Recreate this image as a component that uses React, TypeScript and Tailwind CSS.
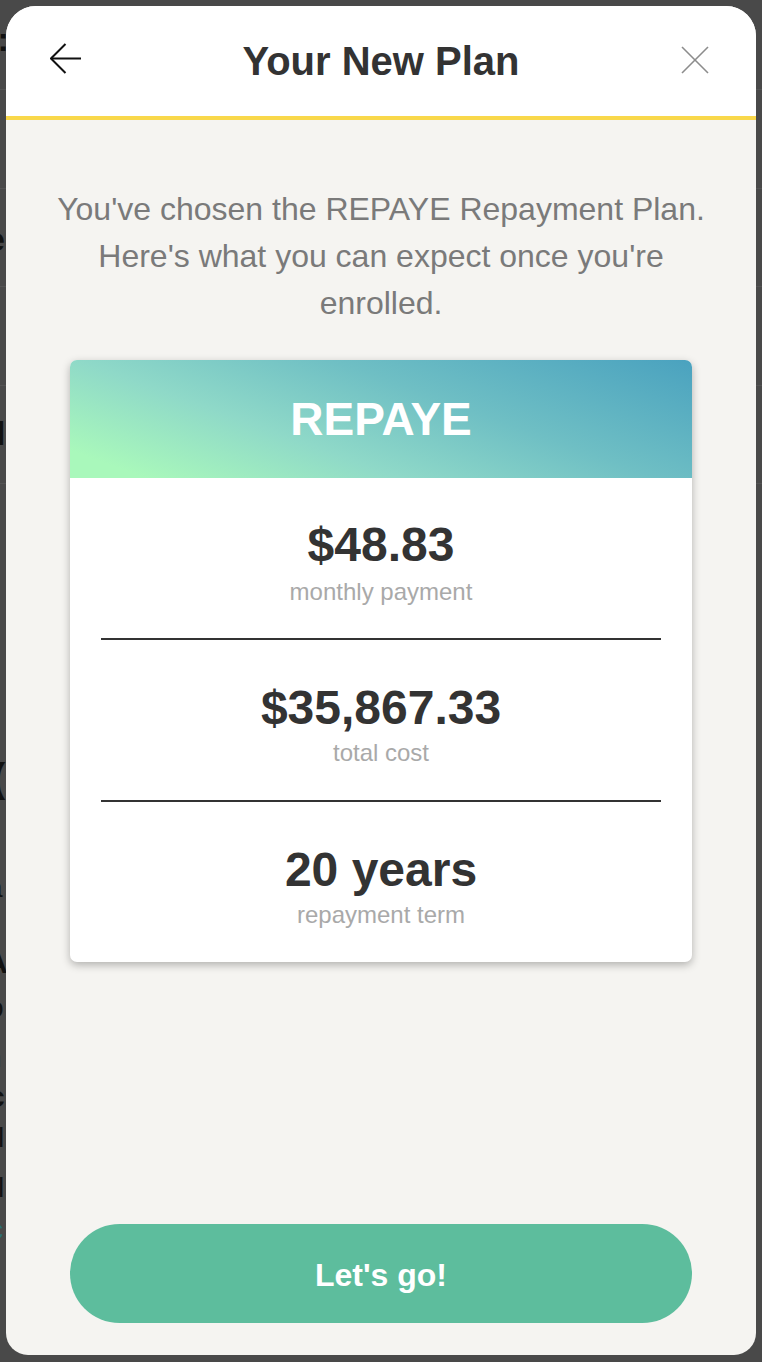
import React from 'react';

type PlanStat = {
  value: string;
  label: string;
};

const STATS: PlanStat[] = [
  { value: '$48.83', label: 'monthly payment' },
  { value: '$35,867.33', label: 'total cost' },
  { value: '20 years', label: 'repayment term' },
];

// bits of the page behind the modal that peek out on the left edge
const BACKDROP_GLYPHS = [
  { text: 'i:', cls: 'top-[22px] left-[-12px] text-[34px] font-bold text-[#111]' },
  { text: 'e', cls: 'top-[222px] left-[-14px] text-[34px] font-bold text-[#111]' },
  { text: 'l', cls: 'top-[416px] left-[-4px] text-[34px] font-bold text-[#111]' },
  { text: '(', cls: 'top-[758px] left-[-8px] text-[40px] font-bold text-[#111]' },
  { text: 'a', cls: 'top-[874px] left-[-13px] text-[28px] text-[#111]' },
  { text: 'A', cls: 'top-[948px] left-[-14px] text-[30px] font-bold text-[#111]' },
  { text: 'o', cls: 'top-[994px] left-[-12px] text-[28px] text-[#111]' },
  { text: 'n', cls: 'top-[1044px] left-[-14px] text-[28px] text-[#111]' },
  { text: 'c', cls: 'top-[1082px] left-[-12px] text-[30px] font-bold text-[#111]' },
  { text: 'l', cls: 'top-[1124px] left-[-2px] text-[28px] text-[#111]' },
  { text: 'l', cls: 'top-[1174px] left-[-2px] text-[28px] text-[#111]' },
  { text: 'c', cls: 'top-[1216px] left-[-11px] text-[28px] text-[#2e6f73]' },
];

function BackArrow() {
  return (
    <svg width="32" height="31" viewBox="0 0 32 31" fill="none" stroke="#111" strokeWidth="2">
      <path d="M1 15.5 H31" />
      <path d="M15.5 1 L1 15.5 L15.5 30" />
    </svg>
  );
}

function CloseIcon() {
  return (
    <svg width="28" height="28" viewBox="0 0 28 28" fill="none" stroke="#8c8c8c" strokeWidth="1.6">
      <path d="M1 1 L27 27" />
      <path d="M27 1 L1 27" />
    </svg>
  );
}

function StatRow({ stat, first }: { stat: PlanStat; first: boolean }) {
  return (
    <div className={first ? 'pt-[39px] pb-[33px] text-center' : 'pt-[40px] pb-[34px] text-center'}>
      <div className="text-[48px] leading-[56px] font-bold text-[#333]">{stat.value}</div>
      <div className={first ? 'mt-[6px] text-[24px] leading-[26px] text-[#a9a9a9]' : 'mt-[4px] text-[24px] leading-[26px] text-[#a9a9a9]'}>
        {stat.label}
      </div>
    </div>
  );
}

export default function App() {
  return (
    <div
      className="relative min-h-[1362px] w-full bg-[#494949] p-[6px] overflow-hidden"
      style={{ fontFamily: '"Liberation Sans", Helvetica, Arial, sans-serif' }}
    >
      <div className="absolute inset-0 pointer-events-none">
        <div className="absolute left-0 right-0 top-[89px] h-px bg-[#545454]" />
        <div className="absolute left-0 right-0 top-[188px] h-px bg-[#545454]" />
        <div className="absolute left-0 right-0 top-[286px] h-px bg-[#545454]" />
        <div className="absolute left-0 right-0 top-[385px] h-px bg-[#545454]" />
        <div className="absolute left-0 right-0 top-[483px] h-px bg-[#545454]" />
        {BACKDROP_GLYPHS.map((g, i) => (
          <span key={i} className={`absolute leading-none ${g.cls}`}>
            {g.text}
          </span>
        ))}
      </div>

      <div className="relative z-10 flex h-[1349px] flex-col overflow-hidden rounded-t-[30px] rounded-b-[22px] bg-[#f5f4f1]">
        <div className="grid h-[110px] grid-cols-[1fr_auto_1fr] items-center bg-white px-[44px]">
          <div className="flex items-center pb-[6px]">
            <BackArrow />
          </div>
          <h1 className="text-[40px] font-bold leading-none text-[#333]">Your New Plan</h1>
          <div className="flex items-center justify-end pb-[3px] pr-[3px]">
            <CloseIcon />
          </div>
        </div>
        <div className="h-[4px] bg-[#f9d84a]" />

        <div className="flex flex-1 flex-col px-[64px] pt-[66px] pb-[32px]">
          <p className="-mx-[40px] text-center text-[32px] leading-[47px] text-[#7a7a7a]">
            <span className="block whitespace-nowrap">You've chosen the REPAYE Repayment Plan.</span>
            <span className="block whitespace-nowrap">Here's what you can expect once you're</span>
            <span className="block whitespace-nowrap">enrolled.</span>
          </p>

          <div className="mt-[33px] overflow-hidden rounded-[7px] bg-white shadow-[0_3px_8px_rgba(0,0,0,0.28)]">
            <div className="flex h-[118px] items-center justify-center bg-[linear-gradient(20deg,#a9f8bb_8%,#8fd9c8_35%,#6fbfc4_62%,#4aa2bf_100%)]">
              <span className="text-[46px] font-bold leading-none text-white">REPAYE</span>
            </div>
            {STATS.map((stat, i) => (
              <div key={stat.label}>
                {i > 0 && <div className="mx-[31px] h-[2px] bg-[#333]" />}
                <StatRow stat={stat} first={i === 0} />
              </div>
            ))}
          </div>

          <button className="mt-auto flex h-[99px] w-full items-center justify-center rounded-full bg-[#5dbd9d] pt-[3px] text-[32px] font-bold text-white">
            Let's go!
          </button>
        </div>
      </div>
    </div>
  );
}
